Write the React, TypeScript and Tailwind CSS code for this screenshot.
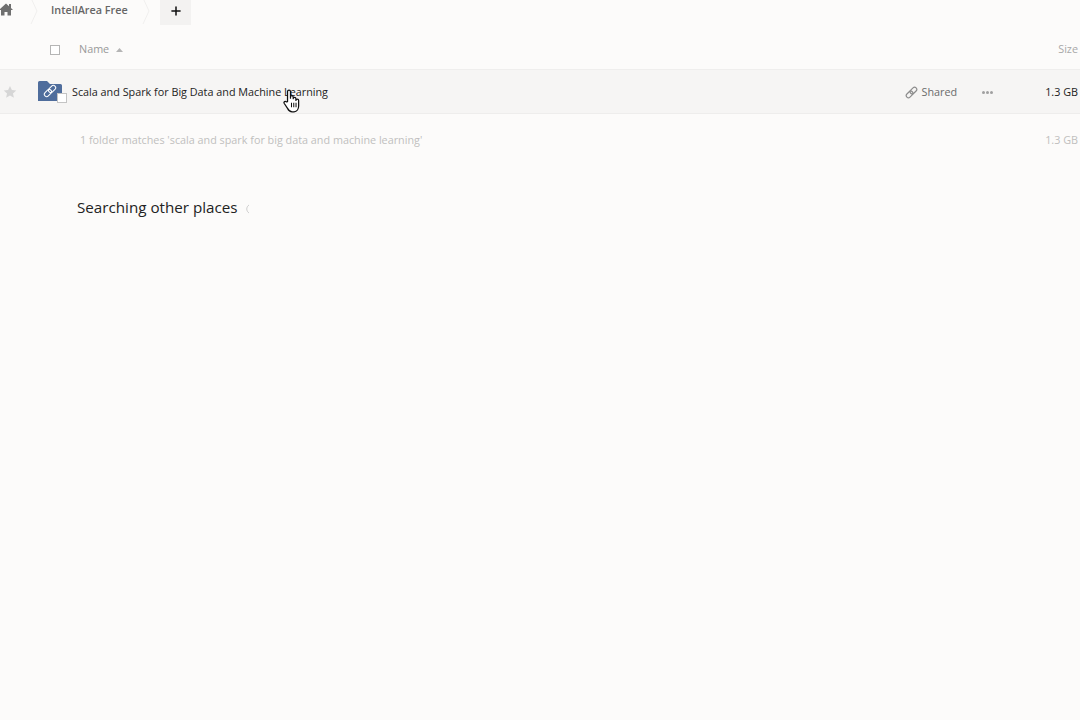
import { Plus } from 'lucide-react';

function Crumb() {
  return (
    <svg width="8" height="26" viewBox="0 0 8 26" fill="none" stroke="#f0efee" strokeWidth="1" className="shrink-0">
      <path d="M1 0l6 13-6 13" />
    </svg>
  );
}

function LinkIcon({ size, color, width }: { size: number; color: string; width: number }) {
  return (
    <svg width={size} height={size} viewBox="0 0 24 24" fill="none" stroke={color} strokeWidth={width}>
      <g transform="rotate(45 12 12)">
        <rect x="8" y="0" width="8" height="14" rx="4" />
        <rect x="8" y="10" width="8" height="14" rx="4" />
      </g>
    </svg>
  );
}

export default function App() {
  return (
    <div className="w-[1080px] h-[720px] overflow-hidden bg-[#fcfbfa] font-['Open_Sans',sans-serif] text-[10.8px] text-[#222]">
      {/* Breadcrumb */}
      <div className="flex items-start h-[25px]">
        <svg width="13" height="13" viewBox="0 0 13 13" fill="#6f6f6f" className="mt-[3px] shrink-0">
          <path d="M6 .5L9 3.300V1h2v4L13 7h-2v5.500H7.500V9h-3v3.500H1V7h-2z" />
        </svg>
        <div className="ml-[17px] -mt-[2px]"><Crumb /></div>
        <span className="ml-[13px] w-[91px] mt-[2px] font-semibold text-[#666]">IntellArea Free</span>
        <div className="-mt-[2px]"><Crumb /></div>
        <div className="ml-[10px] w-[31px] h-[25px] pb-[3px] bg-[#f3f2f1] flex items-center justify-center">
          <Plus size={14} strokeWidth={2.6} color="#111" />
        </div>
      </div>

      {/* Header */}
      <div className="flex items-center h-[45px] pt-[5px] border-b border-[#efeeed] text-[#a8a8a8]">
        <div className="ml-[50px] w-[10px] h-[10px] border border-[#b5b5b5] bg-white shrink-0" />
        <span className="ml-[19px] text-[#999]">Name</span>
        <svg width="7" height="4" viewBox="0 0 7 4" fill="#b5b5b5" className="ml-[7px]"><path d="M3.500 0L7 4H0z" /></svg>
        <span className="ml-auto mr-[2px]">Size</span>
      </div>

      {/* File row */}
      <div className="flex items-center h-[44px] pt-[1px] bg-[#f6f5f4] border-b border-[#eeedec] relative">
        <svg width="14" height="14" viewBox="0 0 24 24" fill="#d6d6d6" className="ml-[3px] shrink-0">
          <path d="M12 1.500l3.200 7 7.600.8-5.700 5.100 1.600 7.500L12 18l-6.700 3.900 1.600-7.500L1.200 9.300l7.600-.8z" />
        </svg>
        <div className="relative ml-[21px] w-[30px] h-[24px] shrink-0">
          <svg width="24" height="20" viewBox="0 0 24 20" fill="#4f6d9c" className="absolute left-0 top-[1px]">
            <path d="M0 1.500A1.500 1.500 0 0 1 1.500 0h7.500l3 3h10.500A1.500 1.500 0 0 1 24 4.500V20H0z" />
          </svg>
          <div className="absolute left-[5px] top-[4px]"><LinkIcon size={14} color="#fff" width={1.8} /></div>
          <div className="absolute left-[19px] top-[13px] w-[10px] h-[10px] border border-[#c4c4c4] bg-white" />
        </div>
        <span className="ml-[4px] text-[#222]">Scala and Spark for Big Data and Machine Learning</span>
        <div className="ml-auto flex items-center text-[#6b6b6b]">
          <LinkIcon size={13} color="#8c8c8c" width={2.2} />
          <span className="ml-[4px]">Shared</span>
        </div>
        <div className="ml-[25px] flex gap-[1px] mt-[1px]">
          <div className="w-[3px] h-[3px] rounded-full bg-[#a0a0a0]" />
          <div className="w-[3px] h-[3px] rounded-full bg-[#a0a0a0]" />
          <div className="w-[3px] h-[3px] rounded-full bg-[#a0a0a0]" />
        </div>
        <span className="ml-[52px] mr-[2px] text-[#222]">1.3 GB</span>
        {/* Mouse cursor */}
        <svg width="17" height="24" viewBox="0 0 15 21" className="absolute left-[283px] top-[19px]" fill="#fff" stroke="#111" strokeWidth="1.100" strokeLinejoin="round">
          <path d="M4 11V2.200a1.300 1.300 0 0 1 2.600 0V8V7a1.200 1.200 0 0 1 2.400 0v1.500a1.200 1.200 0 0 1 2.400 0V10a1.200 1.200 0 0 1 2.400 0v5c0 2.500-1.500 5-4 5H8c-2 0-3-1-4-3l-3-4.500c-.6-1.200 1-2.200 2-1.200z" />
          <path d="M7.500 12v4M9.500 12v4M11.500 12v4" fill="none" strokeWidth="0.900" />
        </svg>
      </div>

      {/* Summary */}
      <div className="flex items-center h-[53px] text-[#c0bfbe] pl-[80px] pr-[2px] justify-between">
        <span>1 folder matches 'scala and spark for big data and machine learning'</span>
        <span>1.3 GB</span>
      </div>

      {/* Other places */}
      <div className="flex items-center mt-[30px] ml-[77px] text-[#222]">
        <span className="text-[15.200px] leading-[20px]">Searching other places</span>
        <svg width="7" height="10" viewBox="0 0 7 10" fill="none" stroke="#cfcfcf" strokeWidth="1" className="ml-[7px] mt-[4px]">
          <path d="M4 1C1 3 1 7 4 9" />
        </svg>
      </div>
    </div>
  );
}
